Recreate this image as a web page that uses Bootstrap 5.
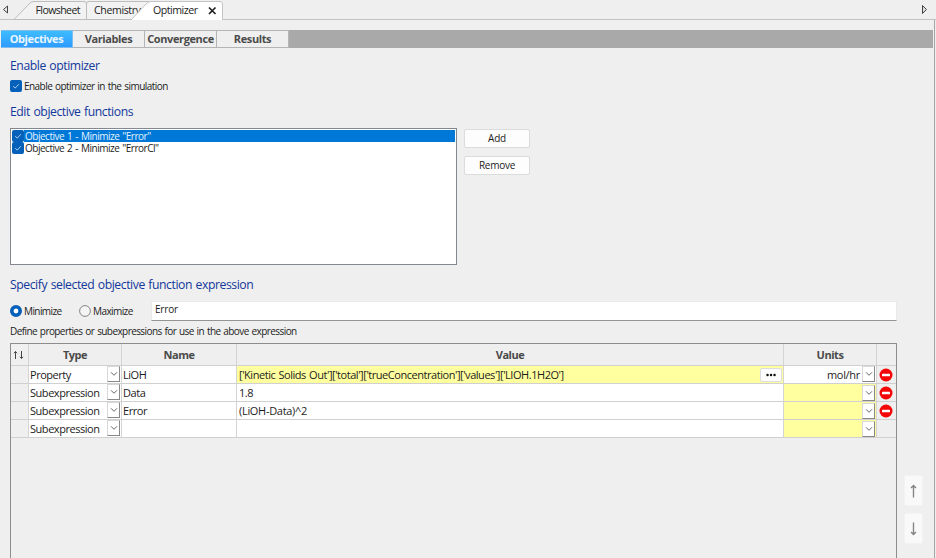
<!DOCTYPE html>
<html lang="en">

<head>
    <meta charset="UTF-8">
    <meta name="viewport" content="width=device-width, initial-scale=1.0">
    <title>Optimizer</title>
    <link href="https://cdn.jsdelivr.net/npm/bootstrap@5.3.0/dist/css/bootstrap.min.css" rel="stylesheet">
    <style>
        body {
            width: 936px;
            height: 558px;
            overflow: hidden;
            background-color: #efefef;
            font-family: "Open Sans", sans-serif;
            font-size: 10px;
            line-height: 14px;
            letter-spacing: -.58px;
            word-spacing: .8px;
            color: #1c1c1c;
        }

        span {
            white-space: nowrap;
        }

        svg {
            display: block;
            flex: none;
        }

        /* Document tabs */
        .doc-tabs {
            height: 20px;
            border-bottom: 1px solid #c3c3c3;
        }

        .doc-tabs svg text {
            font-size: 10.6px;
            letter-spacing: 0;
            fill: #222;
        }

        /* Page body */
        .page-panel {
            width: 935px;
            height: 538px;
            border-right: 1px solid #a5a5a5;
            padding-top: 10px;
        }

        .step-tabs {
            height: 18px;
            width: 932px;
            margin-left: 1px;
            background-color: #a9a9a9;
            font-size: 11px;
            font-weight: 700;
            letter-spacing: -.4px;
            color: #4b4b4b;
        }

        .step-tab {
            width: 72px;
            height: 18px;
            line-height: 16px;
            text-align: center;
            white-space: nowrap;
            background-color: #efefef;
            border: 1px solid #b4b4b4;
            border-left: 0;
        }

        .step-tab.active {
            color: #e9f6ff;
            background: linear-gradient(#3dbcff, #2f9bff);
            border-color: #7fbdf0;
        }

        .content {
            padding-left: 10px;
        }

        .group-title {
            height: 18px;
            margin: 0;
            font-size: 12.2px;
            font-weight: 400;
            line-height: 18px;
            letter-spacing: -.43px;
            color: #12389b;
        }

        .tick {
            width: 12px;
            height: 12px;
            margin: 0;
        }

        .objective-list {
            width: 447px;
            height: 137px;
            background-color: #fff;
            border: 1px solid #83878f;
            padding: 1px;
            letter-spacing: -.48px;
        }

        .objective {
            height: 12.4px;
        }

        .objective .label-text {
            height: 12px;
            padding-left: 1px;
            line-height: 12px;
        }

        .objective.selected .label-text {
            background-color: #0078d7;
            color: #e4f2ff;
        }

        .btn-plain {
            width: 66px;
            height: 19px;
            padding: 0;
            font-size: 10px;
            line-height: 17px;
            letter-spacing: -.25px;
            background-color: #fdfdfd;
            border: 1px solid #dcdcdc;
            border-radius: 2px;
            color: #1c1c1c;
        }

        .expression {
            width: 746px;
            height: 20px;
            padding: 0 3px;
            line-height: 15px;
            letter-spacing: -.2px;
            background-color: #fff;
            border: 1px solid #eaeaea;
            border-bottom-color: #949494;
        }

        /* Expression grid */
        .grid-frame {
            width: 887px;
            height: 220px;
            border: 1px solid #8d8d8d;
            border-bottom: 0;
        }

        .prop-grid {
            table-layout: fixed;
            width: 885px;
            border-collapse: separate;
            border-spacing: 0;
            font-size: 11px;
            letter-spacing: -.46px;
        }

        .prop-grid th,
        .prop-grid td {
            height: 18px;
            padding: 0;
            line-height: 17px;
            white-space: nowrap;
            border-right: 1px solid #d4d4d4;
            border-bottom: 1px solid #d0d0d0;
        }

        .prop-grid th {
            height: 22px;
            text-align: center;
            color: #4a4a4a;
            line-height: 21px;
        }

        .prop-grid td {
            padding: 0 1px;
            background-color: #fff;
        }

        .prop-grid td:nth-child(4) {
            padding-left: 2px;
        }

        .prop-grid td:first-child,
        .prop-grid td:last-child {
            background-color: #efefef;
        }

        .prop-grid td:last-child {
            padding: 0 3px 0 1px;
        }

        .prop-grid th:last-child,
        .prop-grid td:last-child {
            border-right: 0;
        }

        .prop-grid td.filled {
            background-color: #ffffa0;
        }

        .drop {
            width: 13px;
            height: 16px;
            background-color: #fff;
            border: 1px solid #d8d8d8;
            border-right-color: #888;
            border-bottom-color: #888;
        }

        .more {
            width: 22px;
            height: 14px;
            background-color: #fdfdfd;
            border: 1px solid #dcdcdc;
            border-radius: 2px;
        }

        .move {
            width: 19px;
            height: 31px;
            background-color: #f9f9f9;
            border: 1px solid #f3f3f3;
            border-radius: 2px;
        }
    </style>
</head>

<body>
    <!-- shared icons -->
    <svg width="0" height="0" class="position-absolute">
        <symbol id="check" viewBox="0 0 12 12">
            <rect width="12" height="12" rx="2" fill="#0560b9" />
            <path d="M3.2 6.2l2 1.9 3.7-3.9" fill="none" stroke="#b9d9f5" stroke-width=".9" />
        </symbol>
        <symbol id="chevron" viewBox="0 0 8 6">
            <path d="M1 1.3l3 3 3-3" fill="none" stroke="#666" />
        </symbol>
        <symbol id="delete" viewBox="0 0 14 14">
            <circle cx="7" cy="7" r="6.5" fill="#f50505" />
            <rect x="3" y="5.8" width="8" height="2.4" rx=".5" fill="#fff" />
        </symbol>
    </svg>

    <!-- Document tabs -->
    <div class="doc-tabs">
        <svg width="936" height="20">
            <path d="M7.5 6v7L3.5 9.5z" fill="#eee" stroke="#444" />
            <path d="M14 19.5L29 4q2-2.5 5-2.5h50q2.5 0 2.5 2.5v15.5z" fill="#f2f2f2" stroke="#bdbdbd" />
            <path d="M86.5 19.5V4q0-2.5 2.5-2.5h60v18z" fill="#f2f2f2" stroke="#bdbdbd" />
            <text x="35.5" y="14" textLength="45">Flowsheet</text>
            <text x="94" y="14" textLength="47">Chemistry</text>
            <path d="M131 20L146 4q2-2.5 5-2.5h69q2.5 0 2.5 2.5v16z" fill="#fff" />
            <path d="M131 20L146 4q2-2.5 5-2.5h69q2.5 0 2.5 2.5v16" fill="none" stroke="#c4c4c4" />
            <text x="153" y="14" textLength="45">Optimizer</text>
            <path d="M209 7.5l6.5 6.5M215.5 7.5L209 14" stroke="#222" stroke-width="1.7" />
            <path d="M922.5 5.5v8l4-4z" fill="#ddd" stroke="#444" />
        </svg>
    </div>

    <div class="page-panel">
        <div class="step-tabs d-flex">
            <div class="step-tab active">Objectives</div>
            <div class="step-tab">Variables</div>
            <div class="step-tab">Convergence</div>
            <div class="step-tab">Results</div>
        </div>

        <div class="content">
            <h2 class="group-title" style="margin-top: 9px">Enable optimizer</h2>
            <div class="d-flex align-items-center" style="margin-top: 4px; height: 14px">
                <svg class="tick"><use href="#check" /></svg>
                <span style="padding-left: 2px; letter-spacing: -.55px">Enable optimizer in the simulation</span>
            </div>

            <h2 class="group-title" style="margin-top: 10px">Edit objective functions</h2>
            <div class="d-flex" style="margin-top: 7px">
                <div class="objective-list">
                    <div class="objective selected d-flex">
                        <svg class="tick"><use href="#check" /></svg>
                        <span class="label-text flex-grow-1">Objective 1 - Minimize "Error"</span>
                    </div>
                    <div class="objective d-flex">
                        <svg class="tick"><use href="#check" /></svg>
                        <span class="label-text flex-grow-1">Objective 2 - Minimize "ErrorCl"</span>
                    </div>
                </div>
                <div class="d-flex flex-column" style="margin-left: 7px; padding-top: 1px; gap: 8px">
                    <button class="btn btn-plain">Add</button>
                    <button class="btn btn-plain">Remove</button>
                </div>
            </div>

            <h2 class="group-title" style="margin-top: 11px">Specify selected objective function expression</h2>
            <div class="d-flex align-items-center" style="margin-top: 7px; height: 20px">
                <svg width="12" height="12">
                    <circle cx="6" cy="6" r="4.2" fill="#fff" stroke="#0560b9" stroke-width="3.6" />
                </svg>
                <span style="width: 57px; padding-left: 2px">Minimize</span>
                <svg width="12" height="12">
                    <circle cx="6" cy="6" r="5.4" fill="#f4f4f4" stroke="#858585" />
                </svg>
                <span style="width: 60px; padding-left: 2px">Maximize</span>
                <div class="expression align-self-start">Error</div>
            </div>
            <div style="margin-top: 3px"><span>Define properties or subexpressions for use in the above expression</span></div>

            <div class="d-flex" style="margin-top: 5px">
                <div class="grid-frame">
                    <table class="prop-grid">
                        <colgroup>
                            <col style="width: 18px">
                            <col style="width: 93px">
                            <col style="width: 115px">
                            <col style="width: 547px">
                            <col style="width: 93px">
                            <col style="width: 19px">
                        </colgroup>
                        <tr>
                            <th>
                                <svg width="12" height="10" style="margin-left: 2px">
                                    <path d="M2.5 9V1.5M1 3.2l1.5-1.7L4 3.2M8.5 1v7.5M7 6.8l1.5 1.7L10 6.8" fill="none" stroke="#444" />
                                </svg>
                            </th>
                            <th>Type</th>
                            <th>Name</th>
                            <th>Value</th>
                            <th>Units</th>
                            <th></th>
                        </tr>
                        <tr>
                            <td></td>
                            <td><div class="d-flex justify-content-between"><span>Property</span><div class="drop d-flex align-items-center justify-content-center"><svg width="8" height="6"><use href="#chevron" /></svg></div></div></td>
                            <td><span>LiOH</span></td>
                            <td class="filled"><div class="d-flex justify-content-between align-items-center"><span>['Kinetic Solids Out']['total']['trueConcentration']['values']['LIOH.1H2O']</span><div class="more d-flex align-items-center justify-content-center"><svg width="10" height="4"><path d="M1.5 2h.1M5 2h.1M8.5 2h.1" stroke="#111" stroke-width="2.4" stroke-linecap="round" /></svg></div></div></td>
                            <td><div class="d-flex justify-content-end"><span style="margin-right: 2px; letter-spacing: -.3px">mol/hr</span><div class="drop d-flex align-items-center justify-content-center"><svg width="8" height="6"><use href="#chevron" /></svg></div></div></td>
                            <td><svg class="mx-auto" width="14" height="14"><use href="#delete" /></svg></td>
                        </tr>
                        <tr>
                            <td></td>
                            <td><div class="d-flex justify-content-between"><span>Subexpression</span><div class="drop d-flex align-items-center justify-content-center"><svg width="8" height="6"><use href="#chevron" /></svg></div></div></td>
                            <td><span>Data</span></td>
                            <td><span>1.8</span></td>
                            <td class="filled"><div class="d-flex justify-content-end"><div class="drop d-flex align-items-center justify-content-center"><svg width="8" height="6"><use href="#chevron" /></svg></div></div></td>
                            <td><svg class="mx-auto" width="14" height="14"><use href="#delete" /></svg></td>
                        </tr>
                        <tr>
                            <td></td>
                            <td><div class="d-flex justify-content-between"><span>Subexpression</span><div class="drop d-flex align-items-center justify-content-center"><svg width="8" height="6"><use href="#chevron" /></svg></div></div></td>
                            <td><span>Error</span></td>
                            <td><span style="letter-spacing: -.3px">(LiOH-Data)^2</span></td>
                            <td class="filled"><div class="d-flex justify-content-end"><div class="drop d-flex align-items-center justify-content-center"><svg width="8" height="6"><use href="#chevron" /></svg></div></div></td>
                            <td><svg class="mx-auto" width="14" height="14"><use href="#delete" /></svg></td>
                        </tr>
                        <tr>
                            <td></td>
                            <td><div class="d-flex justify-content-between"><span>Subexpression</span><div class="drop d-flex align-items-center justify-content-center"><svg width="8" height="6"><use href="#chevron" /></svg></div></div></td>
                            <td></td>
                            <td></td>
                            <td class="filled"><div class="d-flex justify-content-end"><div class="drop d-flex align-items-center justify-content-center"><svg width="8" height="6"><use href="#chevron" /></svg></div></div></td>
                            <td></td>
                        </tr>
                    </table>
                </div>
                <div class="d-flex flex-column" style="margin: 132px 0 0 7px; gap: 7px">
                    <div class="move d-flex align-items-center justify-content-center"><svg width="9" height="14"><path d="M4.5 13.5V1.5M2 4l2.5-2.5L7 4" fill="none" stroke="#858585" stroke-width="1.4" /></svg></div>
                    <div class="move d-flex align-items-center justify-content-center"><svg width="9" height="14"><path d="M4.5 .5v12M2 10l2.5 2.5L7 10" fill="none" stroke="#858585" stroke-width="1.4" /></svg></div>
                </div>
            </div>
        </div>
    </div>

    <script src="https://cdn.jsdelivr.net/npm/bootstrap@5.3.0/dist/js/bootstrap.bundle.min.js"></script>
</body>

</html>
